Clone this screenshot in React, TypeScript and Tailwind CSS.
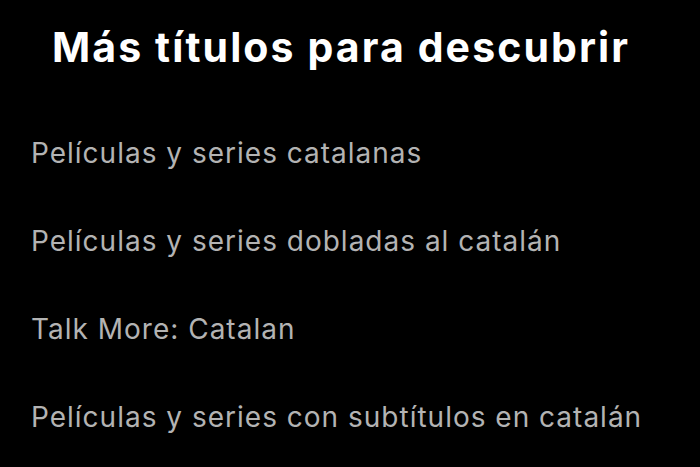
export default function App() {
  const items = [
    "Películas y series catalanas",
    "Películas y series dobladas al catalán",
    "Talk More: Catalan",
    "Películas y series con subtítulos en catalán",
  ];
  return (
    <div
      className="w-[700px] h-[467px] bg-black overflow-hidden"
      style={{ fontFamily: "Inter, 'Noto Sans', sans-serif" }}
    >
      <h2 className="pl-[52px] pt-[23px] text-[41px] leading-[48px] font-bold text-white tracking-[2.1px]">
        Más títulos para descubrir
      </h2>
      <ul className="pl-[31px] pt-[38px]">
        {items.map((t) => (
          <li key={t} className="text-[28px] leading-[88px] text-[#b3b3b3] tracking-[1px]">
            {t}
          </li>
        ))}
      </ul>
    </div>
  );
}
